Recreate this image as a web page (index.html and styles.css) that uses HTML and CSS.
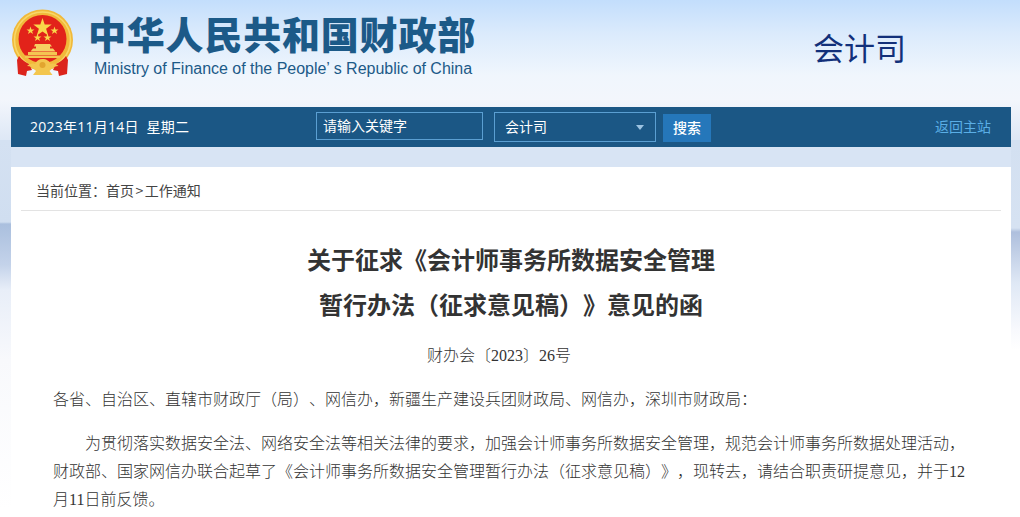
FILE: index.html
```html
<!DOCTYPE html>
<html lang="zh-CN">
<head>
<meta charset="UTF-8">
<title>关于征求《会计师事务所数据安全管理暂行办法（征求意见稿）》意见的函</title>
<link rel="stylesheet" href="styles.css">
</head>
<body>
	<div class="wrap">
		<div class="head">
			<svg class="emblem" width="64" height="68" viewBox="0 0 64 68">
				<circle cx="31.5" cy="31" r="30.500" fill="#f1b93a"/>
				<circle cx="31.5" cy="31" r="28" fill="none" stroke="#f8d768" stroke-width="1.6"/>
				<circle cx="31.5" cy="30" r="24" fill="#e2231a"/>
				<path d="M31.5 9l2.2 6.6h7l-5.600 4.200 2.100 6.700-5.700-4.100-5.700 4.100 2.100-6.700-5.600-4.200h7z" fill="#f9d84a"/>
				<path d="M19.5 17.5l1 2.900h3l-2.400 1.800.9 2.900-2.500-1.800-2.500 1.800.9-2.900-2.400-1.800h3z" fill="#f9d84a"/>
				<path d="M26.5 24.500l1 2.900h3l-2.400 1.800.9 2.900-2.500-1.800-2.500 1.800.9-2.900-2.400-1.800h3z" fill="#f9d84a"/>
				<path d="M36.5 24.500l1 2.900h3l-2.400 1.800.9 2.900-2.500-1.800-2.500 1.800.9-2.900-2.400-1.800h3z" fill="#f9d84a"/>
				<path d="M43.5 17.500l1 2.900h3l-2.400 1.800.9 2.900-2.500-1.800-2.500 1.800.9-2.900-2.400-1.800h3z" fill="#f9d84a"/>
				<path d="M24 35h15l2 2.500h-2v2h3l2.500 3H19.500l2.500-3h3v-2h-2z" fill="#f6cf62"/>
				<path d="M17 43h29v3H17zM14 46.500h35v2.500H14z" fill="#f4c552"/>
				<path d="M8 47c3 4 6 6 10 8l3 6-5 1-1 5-8-2-1-14zM55 47c-3 4-6 6-10 8l-3 6 5 1 1 5 8-2 1-14z" fill="#dc241c"/>
				<path d="M31.500 50c4 0 7 2 8 5 3-1 6 0 8 2-3 0-5 1-7 3l-2 2 3 4H22l3-4-2-2c-2-2-4-3-7-3 2-2 5-3 8-2 1-3 4-5 7.500-5z" fill="#f3c64e"/>
				<circle cx="31.500" cy="56" r="3" fill="#e2a52f"/>
			</svg>
			<div class="logo-text">
				<div class="logo-cn">中华人民共和国财政部</div>
				<div class="logo-en">Ministry of Finance of the People’ s Republic of China</div>
			</div>
			<div class="dept">会计司</div>
		</div>

		<div class="bar">
			<div class="date">2023年11月14日&nbsp; 星期二</div>
			<input class="keyword" type="text" value="请输入关键字">
			<div class="dept-select">会计司<span class="arrow"></span></div>
			<a class="search-btn">搜索</a>
			<a class="back">返回主站</a>
		</div>

		<div class="main">
			<div class="crumb">当前位置：首页<span class="sep">&gt;</span>工作通知</div>
			<h1 class="title">关于征求《会计师事务所数据安全管理<br>暂行办法（征求意见稿）》意见的函</h1>
			<div class="doc-no">财办会〔2023〕26号</div>
			<div class="content">
				<p>各省、自治区、直辖市财政厅（局）、网信办，新疆生产建设兵团财政局、网信办，深圳市财政局：</p>
				<p class="indent">为贯彻落实数据安全法、网络安全法等相关法律的要求，加强会计师事务所数据安全管理，规范会计师事务所数据处理活动，财政部、国家网信办联合起草了《会计师事务所数据安全管理暂行办法（征求意见稿）》，现转去，请结合职责研提意见，并于12月11日前反馈。</p>
			</div>
		</div>
	</div>
</body>
</html>
```

FILE: styles.css
```css
html, body {
	margin: 0;
	padding: 0;
	height: 517px;
	overflow: hidden;
}
body {
	font-family: "Liberation Serif", "Noto Sans CJK SC", serif;
	color: #333;
	text-spacing-trim: space-all;
	background:
		linear-gradient(180deg, #d4e1f2 0, #d0def0 82px, #aabfde 84px, #c4d3ea 125px, #e8eef8 150px, #f8f9fc 220px, #fff 370px) left 140px / 11px 377px no-repeat,
		linear-gradient(180deg, #d3e0f1 0, #d6e2f2 88px, #aebfdd 92px, #dfe8f5 143px, #f8f9fd 190px, #fff 210px) right 140px / 9px 377px no-repeat,
		linear-gradient(180deg, #c3defc 0, #dcebfc 35px, #f0f6fd 75px, #f3f6fc 100px, #d8e4f4 150px) top / 100% 170px no-repeat,
		#fff;
}
.wrap {
	width: 1000px;
	margin-left: 11px;
}

/* head */
.head {
	display: flex;
	align-items: flex-start;
	height: 107px;
}
.emblem {
	margin: 9px 0 0 0;
	flex: none;
}
.logo-text {
	margin: 8px 0 0 15px;
	width: 400px;
	flex: none;
}
.logo-cn {
	margin-left: -2px;
	font-family: "Noto Sans CJK SC", sans-serif;
	font-size: 38px;
	font-weight: 900;
	line-height: 50px;
	letter-spacing: .8px;
	color: #1c5a88;
	white-space: nowrap;
}
.logo-en {
	margin: 1px 0 0 4px;
	font-family: "Liberation Sans", sans-serif;
	font-size: 16px;
	line-height: 20px;
	letter-spacing: -.02px;
	color: #1c5a88;
	white-space: nowrap;
}
.dept {
	margin: 26px 0 0 323px;
	font-family: "Noto Sans CJK SC", sans-serif;
	font-size: 31px;
	line-height: 42px;
	color: #12307a;
	white-space: nowrap;
}

/* bar */
.bar {
	display: flex;
	align-items: flex-start;
	height: 40px;
	background: #1b5785;
	color: #fff;
	font-family: "Noto Sans CJK SC", sans-serif;
	font-size: 14px;
}
.date {
	width: 305px;
	padding-left: 19px;
	box-sizing: border-box;
	flex: none;
	margin-top: 5px;
	line-height: 30px;
	letter-spacing: .25px;
	font-family: "Open Sans", "Noto Sans CJK SC", sans-serif;
	white-space: nowrap;
}
.keyword {
	width: 167px;
	height: 28px;
	margin: 5px 11px 0 0;
	padding: 0 6px 2px;
	box-sizing: border-box;
	border: 1px solid #5b9fd2;
	background: none;
	color: #fff;
	font: inherit;
	outline: none;
}
.dept-select {
	display: flex;
	justify-content: space-between;
	align-items: center;
	width: 162px;
	height: 30px;
	margin: 5px 7px 0 0;
	padding: 0 11px 2px 10px;
	box-sizing: border-box;
	border: 1px solid #5b9fd2;
}
.arrow {
	width: 0;
	height: 0;
	margin-top: 2px;
	border: 4px solid transparent;
	border-top: 5px solid #9cc3e2;
	border-bottom: 0;
}
.search-btn {
	width: 48px;
	height: 28px;
	margin-top: 7px;
	background: #2577ba;
	font-weight: 500;
	line-height: 27px;
	text-align: center;
}
.back {
	margin: 5px 0 0 auto;
	padding-right: 20px;
	line-height: 28px;
	color: #5aaee6;
}

/* main */
.main {
	margin-top: 20px;
	padding: 0 10px;
	background: #fff;
	height: 350px;
}
.crumb {
	height: 43px;
	padding-left: 15px;
	border-bottom: 1px solid #e3e3e3;
	font-family: "Noto Sans CJK SC", sans-serif;
	font-size: 14px;
	line-height: 47px;
	color: #444;
}
.crumb .sep {
	padding: 0 1.5px;
}
.title {
	margin: 25px 0 0;
	font-family: "Noto Sans CJK SC", sans-serif;
	font-size: 24px;
	font-weight: 700;
	line-height: 45px;
	text-align: center;
	color: #333;
}
.doc-no {
	margin-top: 16px;
	padding-right: 24px;
	font-size: 16px;
	line-height: 28px;
	text-align: center;
	font-weight: 300;
}
.content {
	margin-top: 16px;
	padding: 0 32px;
	font-size: 16px;
	font-weight: 300;
	line-height: 28px;
}
.content p {
	margin: 0 0 16px;
}
.content .indent {
	text-indent: 32px;
}
```
